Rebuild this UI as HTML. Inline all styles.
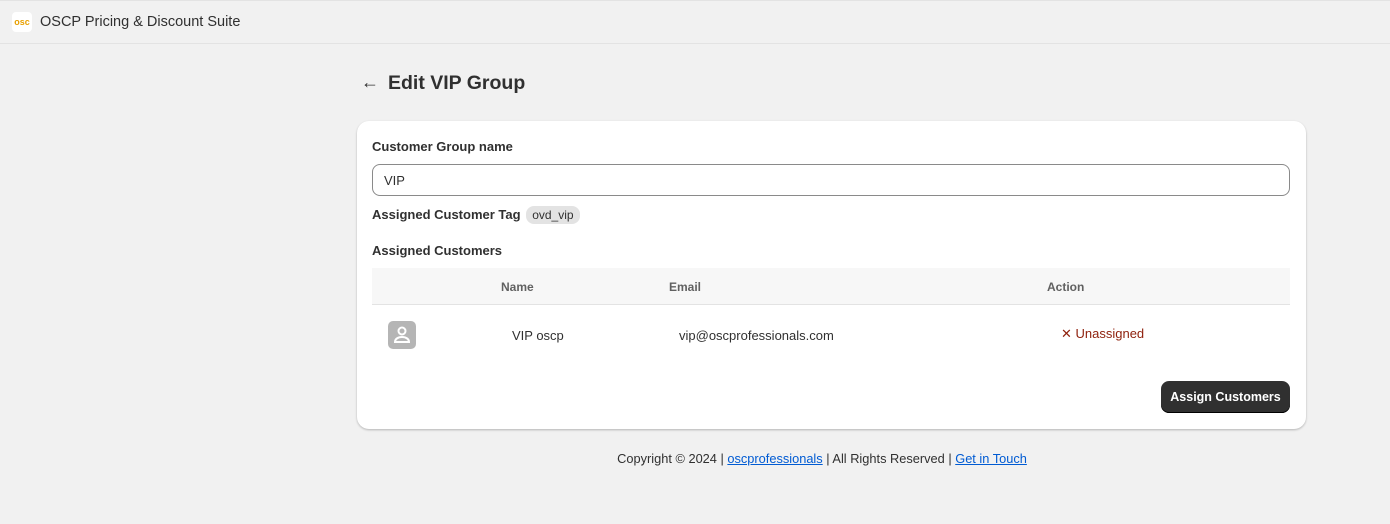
<!DOCTYPE html>
<html><head><style>
*{box-sizing:border-box;margin:0;padding:0}
body{width:1390px;height:524px;background:#f1f1f1;font-family:"Liberation Sans",sans-serif;color:#303030;position:relative;overflow:hidden}
.top{position:absolute;left:0;top:0;width:1390px;height:44px;border-top:1px solid #e3e3e3;border-bottom:1px solid #e3e3e3;background:#f1f1f1}
.logo{position:absolute;left:12px;top:11px;width:20px;height:20px;background:#fff;border-radius:4px;font-size:9px;font-weight:bold;color:#e8a000;text-align:center;line-height:20px}
.ttl{position:absolute;left:40px;top:13px;font-size:14.5px;color:#303030}
.h1{position:absolute;left:388px;top:72px;font-size:19.5px;font-weight:bold;color:#303030}
.back{position:absolute;left:361px;top:72px;font-size:18px}
.card{position:absolute;left:357px;top:121px;width:949px;height:308px;background:#fff;border-radius:12px;box-shadow:0 1px 2px rgba(0,0,0,.25)}
.lbl{position:absolute;font-size:13px;font-weight:bold;color:#303030}
.inp{position:absolute;left:15px;top:43px;width:918px;height:32px;border:1px solid #8a8a8a;border-radius:8px;font-size:13px;padding:8px 11px}
.tag{display:inline-block;background:#e3e3e3;border-radius:8px;font-size:12px;font-weight:normal;padding:2px 6px;margin-left:2px}
.th{position:absolute;left:15px;top:147px;width:918px;height:37px;background:#f7f7f7;border-bottom:1px solid #e3e3e3;font-size:12px;font-weight:bold;color:#616161}
.th span{position:absolute;top:12px}
.av{position:absolute;left:31px;top:200px;width:28px;height:28px;background:#b5b5b5;border-radius:5px}
.btn{position:absolute;left:804px;top:260px;width:129px;height:32px;background:#303030;border-radius:8px;color:#fff;font-size:12.5px;font-weight:bold;text-align:center;line-height:32px;box-shadow:inset 0 -1px 0 #000}
.foot{position:absolute;left:0;width:1390px;top:451px;font-size:13px;text-align:center;color:#303030}
.foot a{color:#005bd3}
</style></head><body>
<div class="top"><div class="logo">osc</div><div class="ttl">OSCP Pricing &amp; Discount Suite</div></div>
<div class="back">←</div>
<div class="h1">Edit VIP Group</div>
<div class="card">
<div class="lbl" style="left:15px;top:18px">Customer Group name</div>
<div class="inp">VIP</div>
<div class="lbl" style="left:15px;top:85px">Assigned Customer Tag <span class="tag">ovd_vip</span></div>
<div class="lbl" style="left:15px;top:122px">Assigned Customers</div>
<div class="th"><span style="left:129px">Name</span><span style="left:297px">Email</span><span style="left:675px">Action</span></div>
<div class="av"><svg width="28" height="28" viewBox="0 0 28 28" fill="none" stroke="#fff" stroke-width="2"><circle cx="14" cy="10" r="3.5"/><path d="M7 21c0-3 3-5 7-5s7 2 7 5z"/></svg></div>
<div style="position:absolute;left:155px;top:207px;font-size:13px">VIP oscp</div>
<div style="position:absolute;left:322px;top:207px;font-size:13px">vip@oscprofessionals.com</div>
<div style="position:absolute;left:704px;top:205px;font-size:13px;color:#8e1f0b">✕ Unassigned</div>
<div class="btn">Assign Customers</div>
</div>
<div class="foot"><span style="position:relative;left:127px;font-size:12.8px">Copyright © 2024 | <a href="#">oscprofessionals</a> | All Rights Reserved | <a href="#">Get in Touch</a></span></div>
</body></html>
